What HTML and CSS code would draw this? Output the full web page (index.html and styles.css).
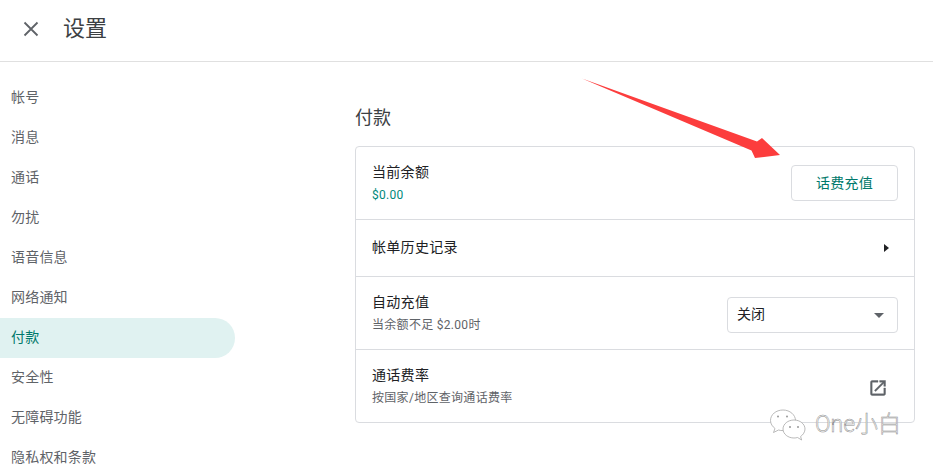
FILE: index.html
```html
<!DOCTYPE html>
<html lang="zh-CN">
<head>
<meta charset="utf-8">
<title>设置</title>
<link rel="stylesheet" href="styles.css">
</head>
<body>
<header class="topbar">
  <svg class="close-icon" viewBox="0 0 16 16" width="16" height="16"><path d="M1.500 1.500l13 13M14.500 1.500l-13 13" fill="none" stroke="#5f6368" stroke-width="1.800"/></svg>
  <h1 class="page-title">设置</h1>
</header>
<div class="layout">
  <nav class="sidebar">
    <a class="nav-item">帐号</a>
    <a class="nav-item">消息</a>
    <a class="nav-item">通话</a>
    <a class="nav-item">勿扰</a>
    <a class="nav-item">语音信息</a>
    <a class="nav-item">网络通知</a>
    <a class="nav-item active">付款</a>
    <a class="nav-item">安全性</a>
    <a class="nav-item">无障碍功能</a>
    <a class="nav-item">隐私权和条款</a>
  </nav>
  <main class="content">
    <h2 class="section-title">付款</h2>
    <section class="card">
      <div class="row row-tall">
        <div class="row-text">
          <div class="row-label">当前余额</div>
          <div class="row-sub teal">$0.00</div>
        </div>
        <button class="btn">话费充值</button>
      </div>
      <div class="row row-short">
        <div class="row-label">帐单历史记录</div>
        <svg class="chevron" viewBox="0 0 5 8" width="5" height="8"><path d="M0 0l5 4-5 4z" fill="#202124"/></svg>
      </div>
      <div class="row row-tall">
        <div class="row-text">
          <div class="row-label">自动充值</div>
          <div class="row-sub">当余额不足 $2.00时</div>
        </div>
        <div class="select">
          <span>关闭</span>
          <svg viewBox="0 0 10 5" width="10" height="5"><path d="M0 0h10L5 5z" fill="#5f6368"/></svg>
        </div>
      </div>
      <div class="row row-tall">
        <div class="row-text">
          <div class="row-label">通话费率</div>
          <div class="row-sub">按国家/地区查询通话费率</div>
        </div>
        <svg class="ext-icon" viewBox="0 0 24 24" width="20" height="20"><path d="M19 19H5V5h7V3H5a2 2 0 0 0-2 2v14a2 2 0 0 0 2 2h14c1.100 0 2-.9 2-2v-7h-2v7zM14 3v2h3.590l-9.830 9.830 1.410 1.410L19 6.410V10h2V3h-7z" fill="#5f6368" stroke="#5f6368" stroke-width="0.500"/></svg>
      </div>
    </section>
  </main>
</div>
<svg class="arrow" viewBox="0 0 933 467" width="933" height="467"><path d="M582 78.500L757 141.500 762 138 780 155 755 158 751.500 150.500z" fill="#fc3d3d"/></svg>
<div class="watermark">
  <svg class="wechat" viewBox="0 0 38 34" width="38" height="34">
    <g fill="#fff" stroke="#a8a8a8" stroke-width="0.800">
      <path d="M14 2C7 2 1.500 6.500 1.500 12.500c0 3.500 2 6 4.500 8l-1.500 4 5-2.500c1.500.5 3 .6 4.500.6 7 0 12.500-4.600 12.500-10.100S21 2 14 2z"/>
      <path d="M25 12c-6 0-11 4-11 9s5 9 11 9c1.300 0 2.500-.2 3.600-.5l4 2.500-1-3.500c2.500-1.700 4.400-4.500 4.400-7.500 0-5-5-9-11-9z"/>
    </g>
    <g fill="#999"><circle cx="9" cy="8.500" r="1"/><circle cx="18" cy="8.500" r="1"/><circle cx="21" cy="19" r="1"/><circle cx="29" cy="19" r="1"/></g>
  </svg>
  <span class="wm-text">One小白</span>
</div>
</body>
</html>
```
FILE: styles.css
```css
* { box-sizing: border-box; }
html, body { margin: 0; height: 100%; overflow: hidden; background: #fff; }
body { font-family: Roboto, "Noto Sans CJK SC", sans-serif; color: #202124; position: relative; }

.topbar { display: flex; align-items: center; height: 62px; border-bottom: 1px solid #e0e0e0; padding-left: 23px; padding-bottom: 3px; }
.close-icon { flex: none; }
.page-title { margin: 0 0 0 24px; font-size: 22px; font-weight: 400; color: #3c4043; line-height: 30px; }

.layout { display: flex; }
.sidebar { width: 235px; flex: none; padding-top: 16px; display: flex; flex-direction: column; }
.nav-item { display: flex; align-items: center; height: 40px; padding: 0 0 4px 11px; font-size: 14px; letter-spacing: 0.2px; color: #5f6368; border-radius: 0 20px 20px 0; }
.nav-item.active { background: #e0f2f1; color: #00796b; }

.content { width: 560px; margin-left: 120px; flex: none; }
.section-title { margin: 0; padding-top: 43px; height: 84px; font-size: 18px; font-weight: 400; line-height: 26px; color: #3c4043; }

.card { border: 1px solid #dadce0; border-radius: 4px; }
.row { display: flex; align-items: center; justify-content: space-between; padding: 0 16px; border-bottom: 1px solid #dadce0; }
.row:last-child { border-bottom: 0; }
.row-tall { height: 73px; }
.row-short { height: 57px; padding-bottom: 2px; }
.row:last-child { height: 72px; }
.row-label { font-size: 14px; line-height: 20px; letter-spacing: 0.3px; color: #202124; }
.row-text { margin-top: -1px; }
.row-sub { font-size: 12px; line-height: 16px; margin-top: 5px; letter-spacing: 0.3px; color: #5f6368; }
.row-sub.teal { color: #00897b; }

.btn { width: 107px; height: 36px; background: #fff; border: 1px solid #dadce0; border-radius: 4px; color: #00796b; font: 14px Roboto, "Noto Sans CJK SC", sans-serif; letter-spacing: 0.3px; padding: 0 0 2px; }
.chevron { margin: 2px 9px 0 0; }
.select { width: 171px; height: 36px; margin-top: 4px; display: flex; align-items: center; justify-content: space-between; padding: 0 13px 0 9px; border: 1px solid #dadce0; border-radius: 4px; font-size: 14px; color: #202124; }
.select span { margin-top: -4px; }
.ext-icon { margin: 4px 10px 0 0; }

.arrow { position: absolute; left: 0; top: 0; pointer-events: none; }
.watermark { position: absolute; left: 769px; top: 408px; display: flex; align-items: center; gap: 8px; }
.wechat { flex: none; }
.wm-text { font-size: 23px; font-weight: 300; color: #fff; -webkit-text-stroke: 0.5px #8a8a8a; line-height: 30px; }
```
